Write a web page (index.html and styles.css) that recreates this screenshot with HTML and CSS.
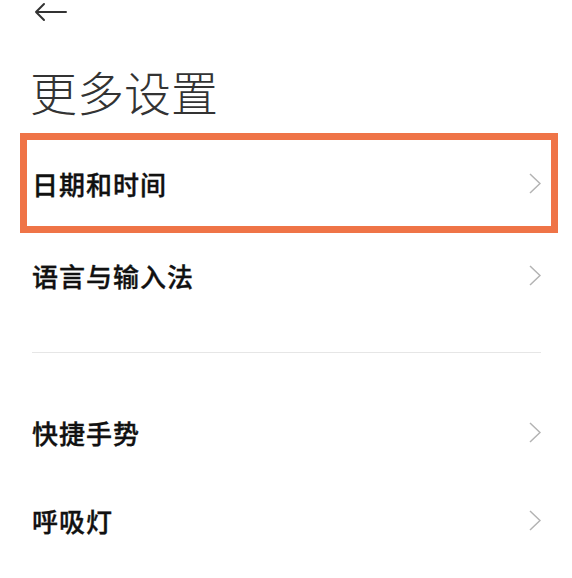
FILE: index.html
```html
<!DOCTYPE html>
<html lang="zh-CN">

<head>
    <meta charset="UTF-8">
    <meta name="viewport" content="width=device-width, initial-scale=1.0">
    <title>更多设置</title>
    <link rel="stylesheet" href="styles.css">
</head>

<body>
    <header class="topbar">
        <svg class="back" width="34" height="20" viewBox="0 0 34 20">
            <path d="M33 10H3M11 2L3 10L11 18" fill="none" stroke="#333" stroke-width="2" stroke-linecap="round" stroke-linejoin="round"/>
        </svg>
    </header>

    <h1 class="title">更多设置</h1>

    <div class="list">
        <a class="row row-marked" href="#">
            <span class="label">日期和时间</span>
            <svg class="chevron" width="12" height="21" viewBox="0 0 12 21"><path d="M1 1L11 10.5L1 20" fill="none" stroke="#b3b3b3" stroke-width="1.5"/></svg>
        </a>
        <a class="row row-short" href="#">
            <span class="label">语言与输入法</span>
            <svg class="chevron" width="12" height="21" viewBox="0 0 12 21"><path d="M1 1L11 10.5L1 20" fill="none" stroke="#b3b3b3" stroke-width="1.5"/></svg>
        </a>
    </div>

    <div class="divider"></div>

    <div class="list">
        <a class="row" href="#">
            <span class="label">快捷手势</span>
            <svg class="chevron" width="12" height="21" viewBox="0 0 12 21"><path d="M1 1L11 10.5L1 20" fill="none" stroke="#b3b3b3" stroke-width="1.5"/></svg>
        </a>
        <a class="row" href="#">
            <span class="label">呼吸灯</span>
            <svg class="chevron" width="12" height="21" viewBox="0 0 12 21"><path d="M1 1L11 10.5L1 20" fill="none" stroke="#b3b3b3" stroke-width="1.5"/></svg>
        </a>
    </div>
</body>

</html>
```

FILE: styles.css
```css
body {
    margin: 0;
    padding: 0;
    background-color: #fff;
    font-family: "Noto Sans CJK SC", "Noto Sans", sans-serif;
    width: 572px;
    overflow: hidden;
}

.topbar {
    height: 24px;
    display: flex;
    align-items: center;
    padding-left: 33px;
}

.title {
    margin: 39px 0 0 30px;
    font-size: 47px;
    line-height: 56px;
    font-weight: 300;
    color: #333;
}

.list {
    display: flex;
    flex-direction: column;
}

.row {
    display: flex;
    align-items: center;
    justify-content: space-between;
    height: 88px;
    padding: 0 31px 0 32px;
    text-decoration: none;
    color: #111;
}

.row-marked {
    margin: 14px 14px 0 20px;
    height: 100px;
    box-sizing: border-box;
    border: 7px solid #ef7447;
    padding: 0 10px 0 5px;
}

.row-short {
    height: 84px;
}

.label {
    font-size: 26px;
    letter-spacing: 1px;
    font-weight: 500;
    -webkit-text-stroke: 0.35px #111;
}

.divider {
    height: 1px;
    margin: 35px 31px 35px 32px;
    background-color: #e6e6e6;
}
```
